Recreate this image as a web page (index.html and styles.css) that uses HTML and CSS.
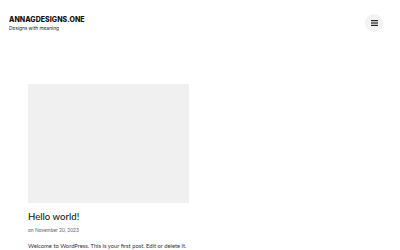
FILE: index.html
```html
<!DOCTYPE html>
<html>
<head>
<meta charset="utf-8">
<link rel="stylesheet" href="styles.css">
</head>
<body>
<header class="site-header">
  <div class="branding">
    <div class="site-title">ANNAGDESIGNS.ONE</div>
    <div class="tagline">Designs with meaning</div>
  </div>
  <button class="menu-btn" aria-label="Menu">
    <svg width="7" height="6" viewBox="0 0 7 6"><rect x="0" y="0" width="7" height="1.2" fill="#222"/><rect x="0" y="2.4" width="7" height="1.2" fill="#222"/><rect x="0" y="4.8" width="7" height="1.2" fill="#222"/></svg>
  </button>
</header>
<main class="content">
  <article class="post">
    <div class="thumb"></div>
    <h2 class="post-title">Hello world!</h2>
    <div class="post-meta">on November 20, 2023</div>
    <p class="excerpt">Welcome to WordPress. This is your first post. Edit or delete it.</p>
  </article>
</main>
</body>
</html>
```
FILE: styles.css
```css
html, body { margin: 0; padding: 0; background: #fff; }
body { font-family: "Lato", "Noto Sans", sans-serif; color: #222; }
.site-header { display: flex; justify-content: space-between; align-items: center; padding: 14px 9px 0 9px; }
.site-title { font-family: "Inter", "DejaVu Sans", sans-serif; font-weight: 800; font-size: 7px; letter-spacing: 0.05px; line-height: 10px; color: #111; }
.tagline { font-family: "Inter", sans-serif; font-size: 4.8px; line-height: 7px; color: #222; }
.menu-btn { width: 18px; height: 18px; border-radius: 50%; border: none; background: #f3f3f3; display: flex; align-items: center; justify-content: center; padding: 0; margin-right: 8px; }
.content { padding: 52px 28px 0 28px; }
.post { width: 161px; }
.thumb { height: 119px; background: #f0f0f0; }
.post-title { font-family: "Lato", sans-serif; font-weight: 500; font-size: 9.6px; margin: 8px 0 0 0; line-height: 12px; color: #222; }
.post-meta { font-size: 5px; color: #666; margin-top: 4px; line-height: 7px; }
.excerpt { font-size: 5.8px; margin: 8px 0 0 0; line-height: 8px; white-space: nowrap; color: #333; }
```
